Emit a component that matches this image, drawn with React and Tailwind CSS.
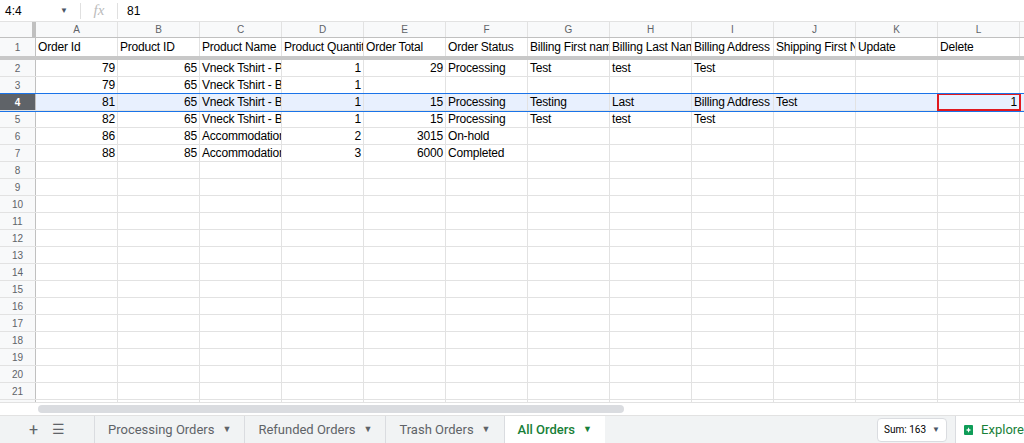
import React from 'react';

const cols = ['A','B','C','D','E','F','G','H','I','J','K','L'];
const header = ['Order Id','Product ID','Product Name','Product Quantity','Order Total','Order Status','Billing First name','Billing Last Name','Billing Address 1','Shipping First Name','Update','Delete'];
const data = [
  [79,65,'Vneck Tshirt - Pink',1,29,'Processing','Test','test','Test','','',''],
  [79,65,'Vneck Tshirt - Blue',1,'','','','','','','',''],
  [81,65,'Vneck Tshirt - Blue',1,15,'Processing','Testing','Last','Billing Address','Test','',1],
  [82,65,'Vneck Tshirt - Blue',1,15,'Processing','Test','test','Test','','',''],
  [86,85,'Accommodation',2,3015,'On-hold','','','','','',''],
  [88,85,'Accommodation',3,6000,'Completed','','','','','',''],
];

const Caret = () => <span className="text-[9px] ml-2">▼</span>;

export default function App() {
  const rows = [header, ...data];
  while (rows.length < 22) rows.push(Array(12).fill(''));
  return (
    <div className="w-[1024px] h-[443px] overflow-hidden bg-white flex flex-col text-[12px] text-black" style={{ fontFamily: '"Liberation Sans", Arial, sans-serif' }}>
      <div className="h-[22px] flex items-center border-b border-[#e2e2e2] shrink-0">
        <div className="w-[80px] pl-[5px] flex justify-between items-center pr-3 text-[12px]">4:4<span className="text-[8px] text-gray-600">▼</span></div>
        <div className="w-px h-4 bg-[#e0e0e0]" />
        <div className="w-[36px] text-center text-[#bbb] italic text-[15px]" style={{ fontFamily: '"Liberation Serif", serif' }}>fx</div>
        <div className="w-px h-4 bg-[#e0e0e0]" />
        <div className="pl-[9px]">81</div>
      </div>
      <div className="flex-1 overflow-hidden">
        <div className="flex h-[16px] bg-[#f8f9fa] border-b border-[#c0c0c0] text-[10px] text-[#5f6368]">
          <div className="w-[36px] shrink-0 border-r-4 border-[#c0c0c0]" />
          {cols.map((c) => (
            <div key={c} className="w-[82px] shrink-0 border-r border-[#e2e2e2] flex items-center justify-center">{c}</div>
          ))}
        </div>
        {rows.map((r, ri) => {
          const sel = ri === 3;
          return (
            <div key={ri} className={`flex ${ri === 0 ? 'border-b-[4px] border-b-[#c8c8c8] h-[22px]' : 'h-[17px] border-b border-[#e2e2e2]'} ${sel ? 'bg-[#e8f0fe] outline outline-1 outline-[#1a73e8] relative z-10' : ''}`}>
              <div className={`w-[36px] shrink-0 text-[10px] flex items-center justify-center border-r border-[#c0c0c0] ${sel ? 'bg-[#5f6368] text-white font-bold' : 'bg-[#f8f9fa] text-[#5f6368]'}`}>{ri + 1}</div>
              {r.map((v, ci) => (
                <div key={ci} className={`w-[82px] shrink-0 border-r border-[#e2e2e2] px-[2px] tracking-[-0.2px] flex items-center overflow-hidden whitespace-nowrap ${typeof v === 'number' ? 'justify-end' : ''} ${sel && ci === 11 ? 'outline outline-2 outline-[#e0191f] -outline-offset-1' : ''}`}>{v}</div>
              ))}
            </div>
          );
        })}
      </div>
      <div className="h-[13px] shrink-0 flex items-center bg-white border-t border-[#e2e2e2]">
        <div className="w-[38px]" />
        <div className="w-[586px] h-[8px] rounded bg-[#dadce0]" />
      </div>
      <div className="h-[28px] shrink-0 bg-[#f1f3f4] flex items-center text-[13px] text-[#5f6368] border-t border-[#e2e2e2]" style={{ fontFamily: 'Roboto, sans-serif' }}>
        <div className="w-[95px] flex items-center justify-center gap-[14px] text-[16px] border-r border-[#dadce0] h-full">
          <span>+</span><span className="text-[14px]">☰</span>
        </div>
        {['Processing Orders','Refunded Orders','Trash Orders'].map(t => (
          <div key={t} className="h-full px-[13px] flex items-center border-r border-[#dadce0]">{t}<Caret /></div>
        ))}
        <div className="h-full px-[13px] flex items-center bg-white text-[#188038] font-medium">All Orders<Caret /></div>
        <div className="flex-1" />
        <div className="h-[24px] px-[6px] flex items-center bg-white border border-[#dadce0] rounded text-[10px] text-black mr-[8px]">Sum: 163<span className="text-[8px] ml-[6px] text-gray-600">▼</span></div>
        <div className="h-full w-px bg-[#dadce0]" />
        <div className="h-full pl-[8px] bg-white flex items-center gap-[8px] text-[#188038] w-[68px]">
          <svg width="16" height="18" viewBox="0 0 16 18"><rect x="0" y="0" width="16" height="18" rx="2" fill="#0f9d58"/><path d="M8 4l1.5 3.5L13 9l-3.5 1.5L8 14l-1.5-3.5L3 9l3.5-1.5z" fill="#fff"/></svg>
          Explore
        </div>
      </div>
    </div>
  );
}
